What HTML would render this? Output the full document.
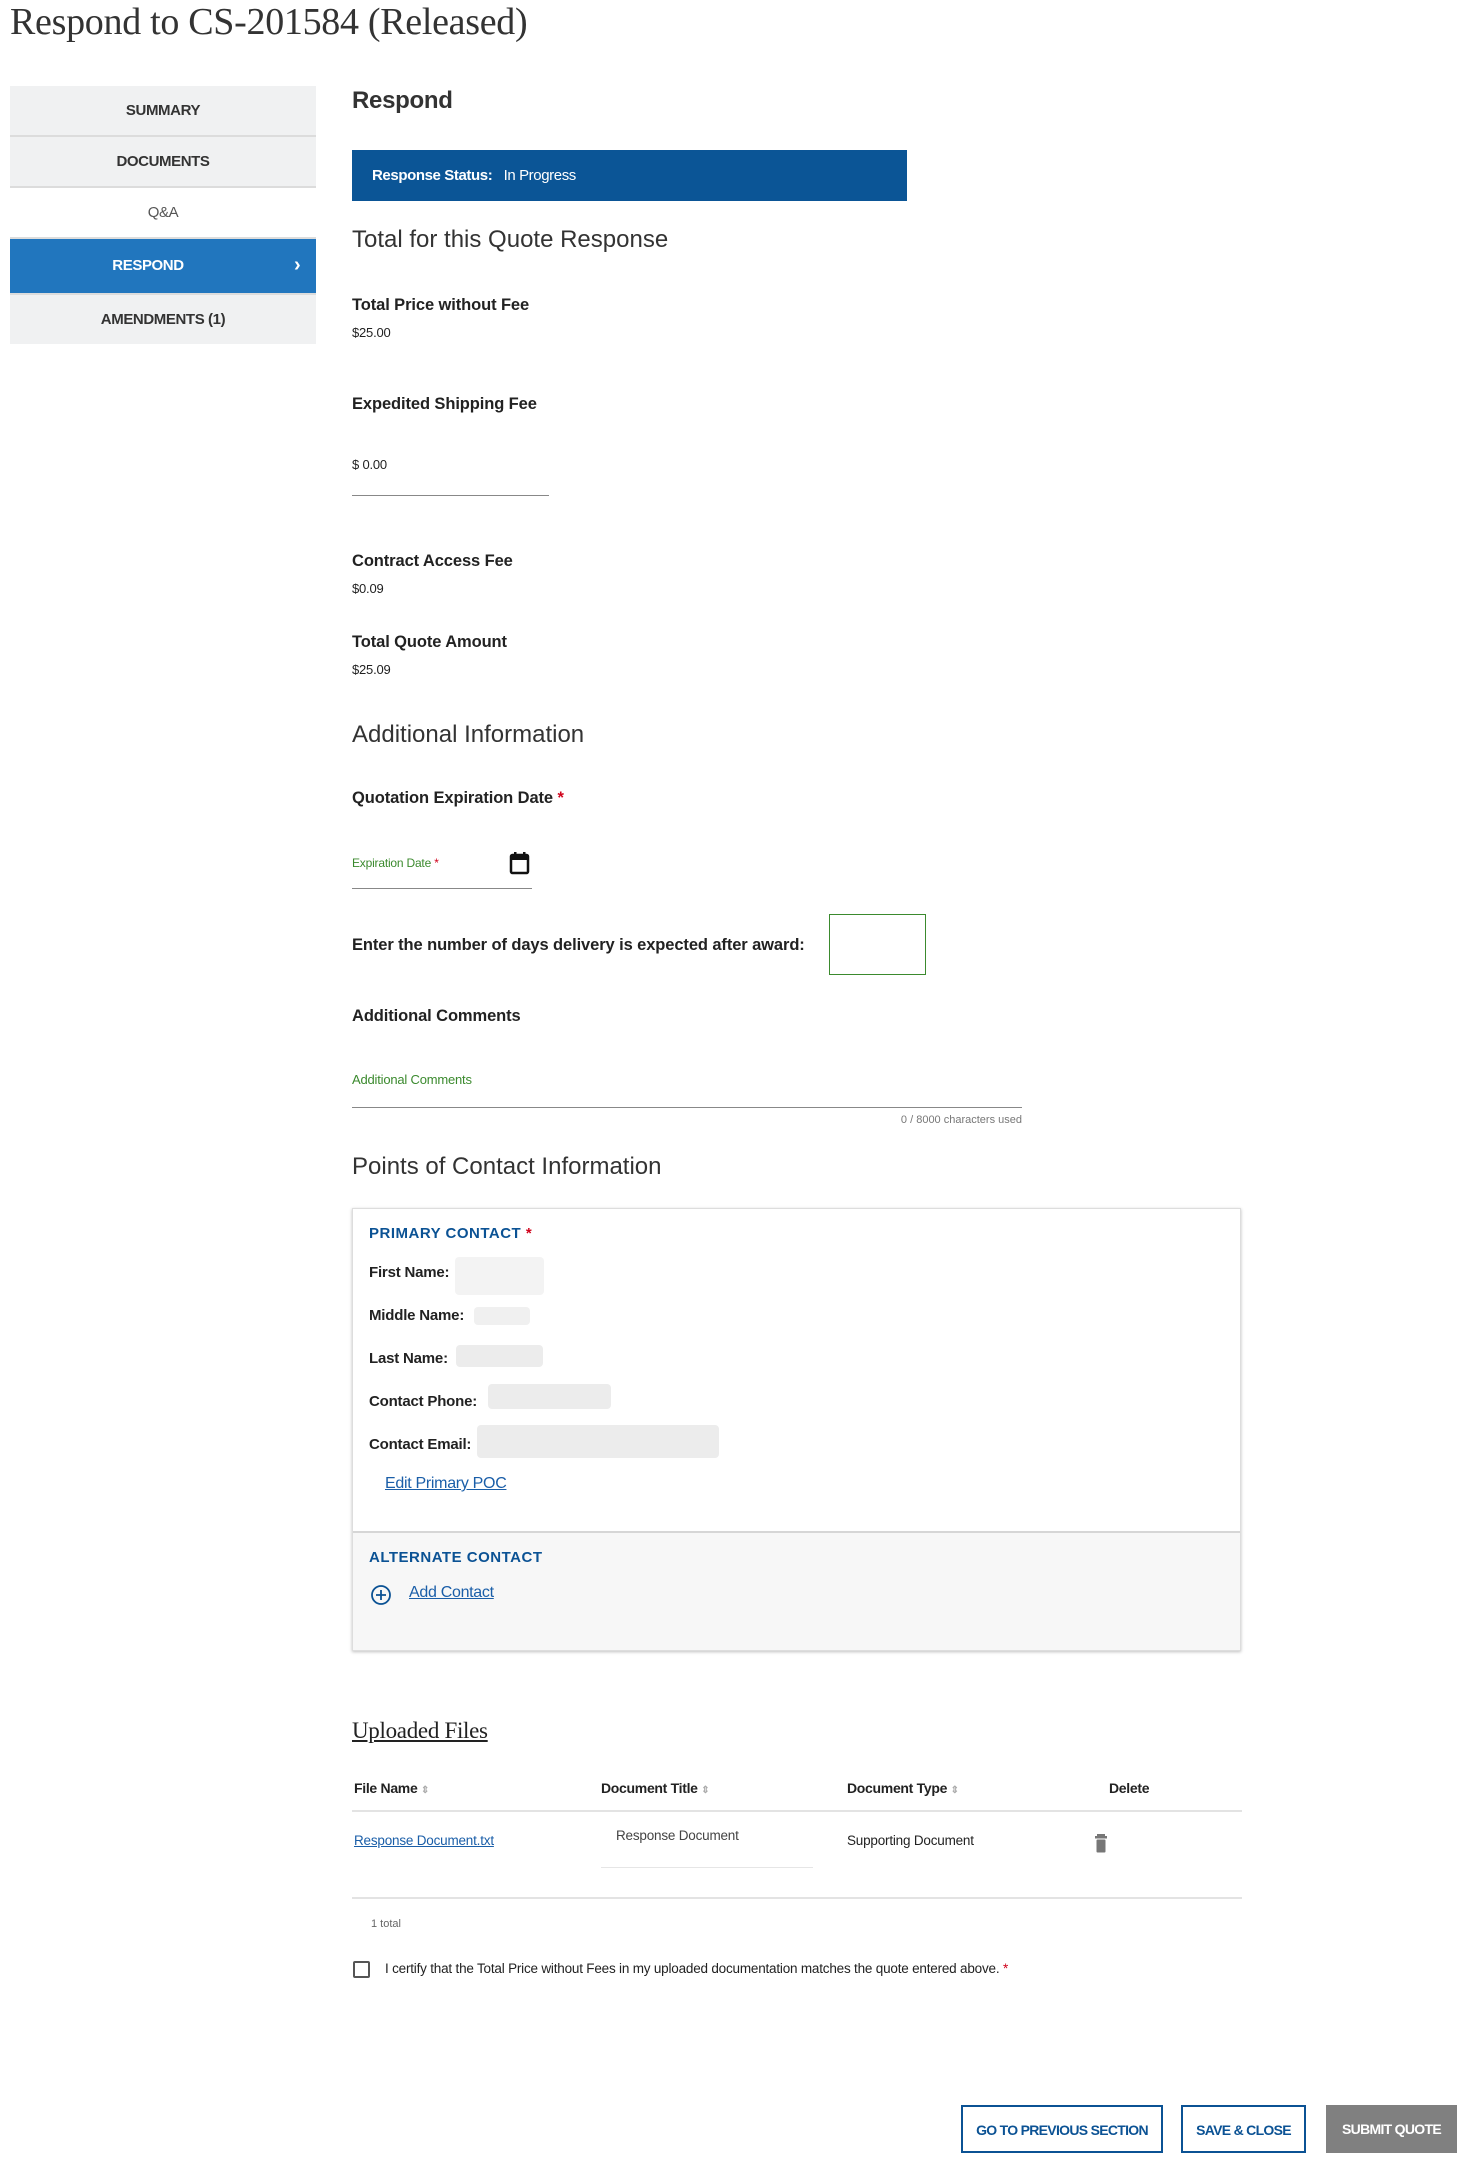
<!DOCTYPE html>
<html><head><meta charset="utf-8"><style>
*{margin:0;padding:0;box-sizing:border-box}
body{width:1472px;height:2167px;position:relative;background:#fff;font-family:"Liberation Sans",Arial,sans-serif;color:#222;overflow:hidden}
.a{position:absolute;white-space:nowrap}
.t{height:24px;line-height:24px}
.h{font-weight:bold;font-size:16.5px;letter-spacing:-0.1px;color:#222}
.v{font-size:13px;letter-spacing:-0.2px;color:#222}
.sec{font-size:24px;letter-spacing:0;color:#333;height:30px;line-height:30px}
.nav{position:absolute;left:10px;width:306px;background:#f0f1f2;font-size:15px;font-weight:bold;letter-spacing:-0.4px;color:#333;text-align:center}
.lbl{font-weight:bold;font-size:15px;letter-spacing:-0.2px}
.ph{position:absolute;background:#ececec;border-radius:4px}
.blue{color:#0b5294}
.red{color:#d0021b}
.link{color:#1a5ea8;text-decoration:underline}
.btn{position:absolute;top:2105px;height:48px;line-height:46px;font-size:14px;font-weight:bold;letter-spacing:-0.7px;text-align:center}
</style></head><body>

<div class="a" style="left:10px;top:0;font-family:'Liberation Serif',serif;font-size:38px;color:#333;line-height:44px;letter-spacing:-0.3px">Respond to CS-201584 (Released)</div>

<div class="nav" style="top:86px;height:49px;line-height:49px">SUMMARY</div>
<div class="a" style="left:10px;top:135px;width:306px;height:2px;background:#dcdcdc"></div>
<div class="nav" style="top:137px;height:49px;line-height:49px">DOCUMENTS</div>
<div class="a" style="left:10px;top:186px;width:306px;height:2px;background:#dcdcdc"></div>
<div class="nav" style="top:188px;height:49px;line-height:49px;background:#fff;font-weight:normal;color:#555">Q&amp;A</div>
<div class="a" style="left:10px;top:237px;width:306px;height:2px;background:#dcdcdc"></div>
<div class="nav" style="top:239px;height:54px;line-height:54px;background:#2176be;color:#fff;padding-right:30px">RESPOND</div>
<div class="a" style="left:294px;top:252px;color:#fff;font-size:20px;line-height:26px;font-weight:bold">›</div>
<div class="a" style="left:10px;top:293px;width:306px;height:2px;background:#dcdcdc"></div>
<div class="nav" style="top:295px;height:49px;line-height:49px">AMENDMENTS (1)</div>

<div class="a" style="left:352px;top:86px;font-size:24px;font-weight:bold;color:#333;letter-spacing:-0.3px;line-height:30px">Respond</div>
<div class="a" style="left:352px;top:150px;width:555px;height:51px;background:#0b5596;color:#fff;font-size:15px;line-height:51px;padding-left:20px;letter-spacing:-0.4px"><b>Response Status:</b>&nbsp;&nbsp;&nbsp;In Progress</div>

<div class="a sec" style="left:352px;top:225px">Total for this Quote Response</div>
<div class="a t h" style="left:352px;top:293px">Total Price without Fee</div>
<div class="a t v" style="left:352px;top:321px">$25.00</div>
<div class="a t h" style="left:352px;top:392px">Expedited Shipping Fee</div>
<div class="a t v" style="left:352px;top:453px">$ 0.00</div>
<div class="a" style="left:352px;top:495px;width:197px;height:1px;background:#888"></div>
<div class="a t h" style="left:352px;top:549px">Contract Access Fee</div>
<div class="a t v" style="left:352px;top:577px">$0.09</div>
<div class="a t h" style="left:352px;top:630px">Total Quote Amount</div>
<div class="a t v" style="left:352px;top:658px">$25.09</div>
<div class="a sec" style="left:352px;top:720px">Additional Information</div>
<div class="a t h" style="left:352px;top:786px">Quotation Expiration Date <span class="red">*</span></div>
<div class="a t" style="left:352px;top:851px;font-size:12px;color:#3b8a2e;letter-spacing:-0.2px">Expiration Date <span class="red">*</span></div>
<svg class="a" style="left:509px;top:851px" width="22" height="24" viewBox="0 0 22 24"><rect x="2" y="4" width="17" height="18" rx="1.5" fill="none" stroke="#111" stroke-width="2.5"/><rect x="2" y="4" width="17" height="5" fill="#111"/><rect x="5" y="1" width="2.5" height="5" fill="#111"/><rect x="14" y="1" width="2.5" height="5" fill="#111"/></svg>
<div class="a" style="left:352px;top:888px;width:180px;height:1px;background:#888"></div>
<div class="a t h" style="left:352px;top:933px">Enter the number of days delivery is expected after award:</div>
<div class="a" style="left:829px;top:914px;width:97px;height:61px;border:1px solid #3b8a2e"></div>
<div class="a t h" style="left:352px;top:1004px">Additional Comments</div>
<div class="a t" style="left:352px;top:1068px;font-size:13px;color:#3b8a2e;letter-spacing:-0.2px">Additional Comments</div>
<div class="a" style="left:352px;top:1107px;width:670px;height:1px;background:#888"></div>
<div class="a" style="left:822px;top:1113px;width:200px;text-align:right;font-size:11px;color:#777;line-height:14px">0 / 8000 characters used</div>
<div class="a sec" style="left:352px;top:1152px">Points of Contact Information</div>

<div class="a" style="left:352px;top:1208px;width:889px;height:443px;border:1px solid #ddd;box-shadow:0 1px 3px rgba(0,0,0,.25);background:#fff"></div>
<div class="a" style="left:353px;top:1531px;width:887px;height:119px;background:#f7f7f7;border-top:2px solid #d6d6d6"></div>
<div class="a t lbl blue" style="left:369px;top:1222px;letter-spacing:0.5px">PRIMARY CONTACT <span class="red">*</span></div>
<div class="a t lbl" style="left:369px;top:1261px">First Name:</div><div class="ph" style="left:455px;top:1257px;width:89px;height:38px;background:#f3f3f3"></div>
<div class="a t lbl" style="left:369px;top:1304px">Middle Name:</div><div class="ph" style="left:474px;top:1307px;width:56px;height:18px;background:#f0f0f0"></div>
<div class="a t lbl" style="left:369px;top:1347px">Last Name:</div><div class="ph" style="left:456px;top:1345px;width:87px;height:22px"></div>
<div class="a t lbl" style="left:369px;top:1390px">Contact Phone:</div><div class="ph" style="left:488px;top:1384px;width:123px;height:25px"></div>
<div class="a t lbl" style="left:369px;top:1433px">Contact Email:</div><div class="ph" style="left:477px;top:1425px;width:242px;height:33px"></div>
<div class="a t link" style="left:385px;top:1472px;font-size:16px;letter-spacing:-0.3px">Edit Primary POC</div>
<div class="a t lbl blue" style="left:369px;top:1546px;letter-spacing:0.5px">ALTERNATE CONTACT</div>
<svg class="a" style="left:370px;top:1584px" width="22" height="22" viewBox="0 0 22 22"><circle cx="11" cy="11" r="9" fill="none" stroke="#0b5294" stroke-width="1.8"/><path d="M11 6v10M6 11h10" stroke="#0b5294" stroke-width="1.8"/></svg>
<div class="a t link" style="left:409px;top:1581px;font-size:16px;letter-spacing:-0.3px">Add Contact</div>

<div class="a" style="left:352px;top:1716px;font-family:'Liberation Serif',serif;font-size:23px;color:#222;text-decoration:underline;line-height:30px;letter-spacing:-0.3px">Uploaded Files</div>
<div class="a t" style="left:354px;top:1776px;font-size:14px;font-weight:bold;letter-spacing:-0.3px">File Name <span style="color:#aaa;font-size:10px">⇕</span></div>
<div class="a t" style="left:601px;top:1776px;font-size:14px;font-weight:bold;letter-spacing:-0.3px">Document Title <span style="color:#aaa;font-size:10px">⇕</span></div>
<div class="a t" style="left:847px;top:1776px;font-size:14px;font-weight:bold;letter-spacing:-0.3px">Document Type <span style="color:#aaa;font-size:10px">⇕</span></div>
<div class="a t" style="left:1109px;top:1776px;font-size:14px;font-weight:bold;letter-spacing:-0.3px">Delete</div>
<div class="a" style="left:352px;top:1810px;width:890px;height:2px;background:#e3e3e3"></div>
<div class="a t link" style="left:354px;top:1829px;font-size:13.5px;letter-spacing:-0.2px">Response Document.txt</div>
<div class="a t" style="left:616px;top:1824px;font-size:13.5px;color:#444;letter-spacing:-0.2px">Response Document</div>
<div class="a" style="left:601px;top:1867px;width:212px;height:1px;background:#e6e6e6"></div>
<div class="a t" style="left:847px;top:1829px;font-size:13.5px;letter-spacing:-0.2px">Supporting Document</div>
<svg class="a" style="left:1094px;top:1833px" width="14" height="20" viewBox="0 0 14 20"><rect x="3" y="1" width="8" height="2" fill="#777"/><rect x="1" y="3" width="12" height="2.5" fill="#777"/><rect x="2.5" y="6.5" width="9" height="13" rx="1" fill="#777"/></svg>
<div class="a" style="left:352px;top:1897px;width:890px;height:2px;background:#e3e3e3"></div>
<div class="a" style="left:371px;top:1917px;font-size:11px;color:#666;line-height:14px">1 total</div>
<div class="a" style="left:353px;top:1961px;width:17px;height:17px;border:2px solid #555;border-radius:2px"></div>
<div class="a t" style="left:385px;top:1957px;font-size:13.5px;letter-spacing:-0.2px">I certify that the Total Price without Fees in my uploaded documentation matches the quote entered above. <span class="red">*</span></div>

<div class="btn" style="left:961px;width:202px;border:2px solid #0b5294;color:#0b5294">GO TO PREVIOUS SECTION</div>
<div class="btn" style="left:1181px;width:125px;border:2px solid #0b5294;color:#0b5294">SAVE &amp; CLOSE</div>
<div class="btn" style="left:1326px;width:131px;background:#808080;color:#fff;line-height:48px">SUBMIT QUOTE</div>
</body></html>
